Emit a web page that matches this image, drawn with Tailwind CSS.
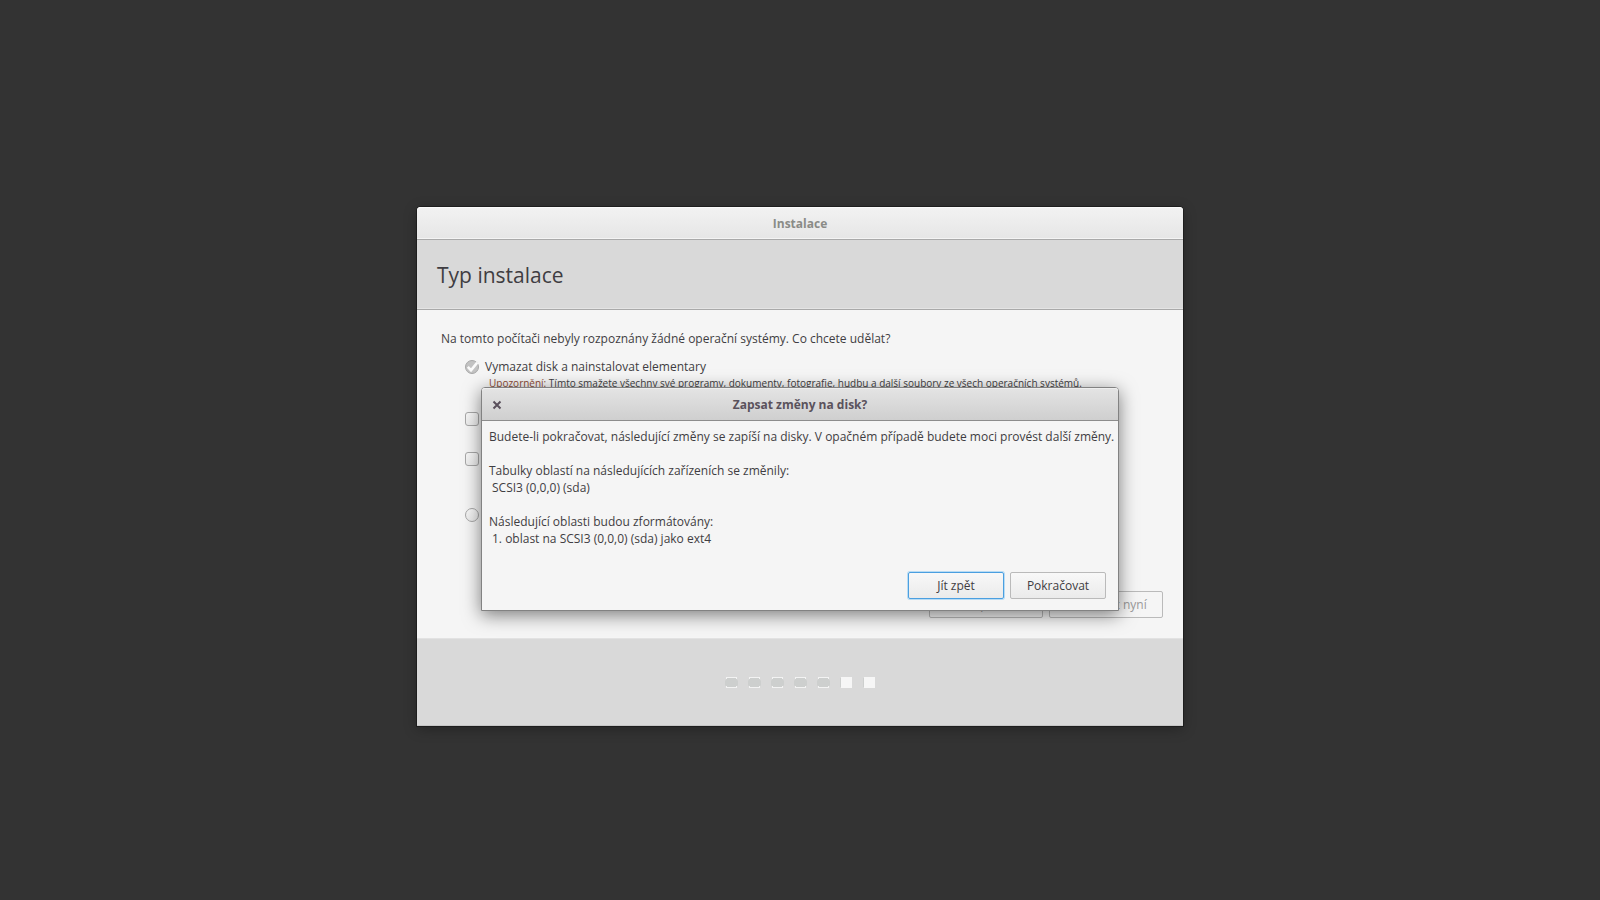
<!DOCTYPE html>
<html lang="cs">
  <head>
    <meta charset="UTF-8" />
    <meta name="viewport" content="width=device-width, initial-scale=1" />
    <title>Instalace</title>
    <script src="https://cdn.jsdelivr.net/npm/@tailwindcss/browser@4"></script>
  </head>
  <body class="flex min-h-screen items-center justify-center bg-[#333333] px-4 pt-[33px] font-['Open_Sans',sans-serif] text-[12px] leading-[17px] text-[#3f3d42]">
    <!-- installer window -->
    <main class="relative w-full max-w-[766px] rounded-t-[4px] bg-[#f5f5f5] shadow-[0_0_0_1px_#1e1e1e,0_3px_14px_rgba(0,0,0,0.3)]">
      <div class="rounded-t-[4px] border-b border-[#a9a9a9] bg-linear-to-b from-[#f2f2f2] to-[#e6e6e6] pt-[8px] pb-[7px] text-center font-bold text-[#8a8b87] shadow-[inset_0_1px_0_#fafafa,inset_0_-1px_0_#f4f4f4]">
        Instalace
      </div>
      <header class="border-b border-[#a9a9a9] bg-[#d9d9d9] px-5 pt-[21px] pb-5 shadow-[inset_0_-1px_0_#e4e4e4]">
        <h1 class="text-[21px] leading-[28px]">Typ instalace</h1>
      </header>

      <form class="pt-5 pr-5 pb-5 pl-6">
        <p>Na tomto počítači nebyly rozpoznány žádné operační systémy. Co chcete udělat?</p>

        <div class="mt-[11px] ml-6 flex items-center gap-[6px]">
          <span class="grid size-[14px]">
            <input id="erase" type="radio" name="type" checked class="col-start-1 row-start-1 size-[14px] appearance-none rounded-full border border-[#a8a8a8] bg-[#c2c2c2]" />
            <svg class="pointer-events-none col-start-1 row-start-1" width="14" height="14" viewBox="0 0 14 14" fill="none">
              <path d="M2.8 6.8 L6 10.2 L12.2 2.6" stroke="#fafafa" stroke-width="2.6" />
            </svg>
          </span>
          <label for="erase">Vymazat disk a nainstalovat elementary</label>
        </div>
        <p class="mt-px ml-12 text-[10px] leading-[14px] whitespace-nowrap">
          <span class="text-[#8c4a34]">Upozornění:</span> Tímto smažete všechny své programy, dokumenty, fotografie, hudbu a další soubory ze všech operačních systémů.
        </p>

        <div class="mt-5 ml-6 flex items-center gap-[6px]">
          <input id="encrypt" type="checkbox" class="size-[14px] appearance-none rounded-[3px] border border-[#a8a8a8] bg-linear-to-b from-[#f8f8f8] to-[#ececec]" />
          <label for="encrypt">Zašifrovat novou instalaci elementary</label>
        </div>
        <div class="mt-[23px] ml-6 flex items-center gap-[6px]">
          <input id="lvm" type="checkbox" class="size-[14px] appearance-none rounded-[3px] border border-[#a8a8a8] bg-linear-to-b from-[#f8f8f8] to-[#ececec]" />
          <label for="lvm">Použít LVM s novou instalací elementary</label>
        </div>
        <div class="mt-[39px] ml-6 flex items-center gap-[6px]">
          <input id="other" type="radio" name="type" class="size-[14px] appearance-none rounded-full border border-[#a8a8a8] bg-linear-to-b from-[#f8f8f8] to-[#ececec]" />
          <label for="other">Něco jiného</label>
        </div>

        <div class="mt-[68px] flex justify-end gap-[6px]">
          <button type="button" disabled class="w-[114px] rounded-[2px] border border-[#bababa] py-[4px] text-[#9a9a9a]">Zpět</button>
          <button type="button" disabled class="w-[114px] rounded-[2px] border border-[#bababa] py-[4px] text-[#9a9a9a]">Instalovat nyní</button>
        </div>
      </form>

      <footer class="flex justify-center gap-[10px] border-t border-[#e2e2e2] bg-[#d9d9d9] pt-[38px] pb-[37px] shadow-[inset_0_-1px_0_#c6c6c6]">
        <svg width="13" height="12" viewBox="0 0 13 12"><path d="M2 1h9l2 3v4l-2 3H2L0 8V4z" fill="#cdcfce" /><path d="M1 0h11v2h-1V1H2v1H1zM1 11h11v-2h-1v1H2v-1H1z" fill="#f3f3f3" /></svg>
        <svg width="13" height="12" viewBox="0 0 13 12"><path d="M2 1h9l2 3v4l-2 3H2L0 8V4z" fill="#cdcfce" /><path d="M1 0h11v2h-1V1H2v1H1zM1 11h11v-2h-1v1H2v-1H1z" fill="#f3f3f3" /></svg>
        <svg width="13" height="12" viewBox="0 0 13 12"><path d="M2 1h9l2 3v4l-2 3H2L0 8V4z" fill="#cdcfce" /><path d="M1 0h11v2h-1V1H2v1H1zM1 11h11v-2h-1v1H2v-1H1z" fill="#f3f3f3" /></svg>
        <svg width="13" height="12" viewBox="0 0 13 12"><path d="M2 1h9l2 3v4l-2 3H2L0 8V4z" fill="#cdcfce" /><path d="M1 0h11v2h-1V1H2v1H1zM1 11h11v-2h-1v1H2v-1H1z" fill="#f3f3f3" /></svg>
        <svg width="13" height="12" viewBox="0 0 13 12"><path d="M2 1h9l2 3v4l-2 3H2L0 8V4z" fill="#cdcfce" /><path d="M1 0h11v2h-1V1H2v1H1zM1 11h11v-2h-1v1H2v-1H1z" fill="#f3f3f3" /></svg>
        <svg width="13" height="12" viewBox="0 0 13 12"><path d="M0 1h1v9H0z" fill="#cdcfce" /><path d="M1 0h11v11H1z" fill="#f6f6f6" /></svg>
        <svg width="13" height="12" viewBox="0 0 13 12"><path d="M0 1h1v9H0z" fill="#cdcfce" /><path d="M1 0h11v11H1z" fill="#f6f6f6" /></svg>
      </footer>

      <!-- confirm dialog over the window -->
      <section role="dialog" aria-labelledby="dialog-title" class="absolute inset-x-16 top-[180px] rounded-t-[4px] border border-[#828282] bg-[#f5f5f5] shadow-[0_4px_18px_rgba(0,0,0,0.5)]">
        <div class="grid grid-cols-[24px_1fr_24px] items-center rounded-t-[3px] border-b border-[#8c8c8c] bg-linear-to-b from-[#e4e4e4] to-[#cfcfcf] px-[3px] pt-[8px] pb-[7px] shadow-[inset_0_1px_0_#eeeeee]">
          <button type="button" aria-label="Zavřít" class="flex justify-center">
            <svg width="10" height="10" viewBox="0 0 10 10" fill="none" stroke="#5a505c" stroke-width="2">
              <path d="M1.5 1.5 L8.5 8.5 M8.5 1.5 L1.5 8.5" />
            </svg>
          </button>
          <h2 id="dialog-title" class="text-center font-bold text-[#5a525c]">Zapsat změny na disk?</h2>
        </div>
        <div class="px-[7px] pt-[7px] whitespace-nowrap">
          <p>Budete-li pokračovat, následující změny se zapíší na disky. V opačném případě budete moci provést další změny.</p>
          <p class="mt-[17px]">Tabulky oblastí na následujících zařízeních se změnily:</p>
          <p class="pl-[3px]">SCSI3 (0,0,0) (sda)</p>
          <p class="mt-[17px]">Následující oblasti budou zformátovány:</p>
          <p class="pl-[3px]">1. oblast na SCSI3 (0,0,0) (sda) jako ext4</p>
        </div>
        <div class="mt-[25px] flex justify-end gap-[6px] pr-3 pb-[11px]">
          <button type="button" class="w-24 rounded-[2px] border border-[#4b9fe0] bg-linear-to-b from-[#f8f8f8] to-[#ebebeb] py-[4px] shadow-[0_0_0_1px_#b9dcf4]">Jít zpět</button>
          <button type="button" class="w-24 rounded-[2px] border border-[#bababa] bg-linear-to-b from-[#f8f8f8] to-[#ebebeb] py-[4px]">Pokračovat</button>
        </div>
      </section>
    </main>
  </body>
</html>
